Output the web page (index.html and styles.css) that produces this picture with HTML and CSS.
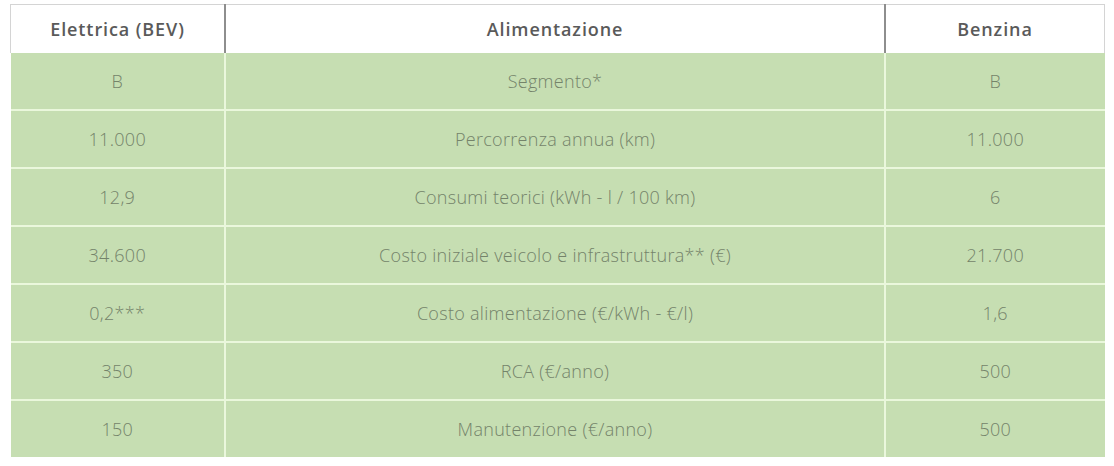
FILE: index.html
```html
<!DOCTYPE html>
<html lang="it">
<head>
<meta charset="utf-8">
<link rel="stylesheet" href="styles.css">
</head>
<body>
<table class="cmp">
  <thead>
    <tr>
      <th class="c1">Elettrica (BEV)</th>
      <th class="c2">Alimentazione</th>
      <th class="c3">Benzina</th>
    </tr>
  </thead>
  <tbody>
    <tr><td>B</td><td>Segmento*</td><td>B</td></tr>
    <tr><td>11.000</td><td>Percorrenza annua (km)</td><td>11.000</td></tr>
    <tr><td>12,9</td><td>Consumi teorici (kWh - l / 100 km)</td><td>6</td></tr>
    <tr><td>34.600</td><td>Costo iniziale veicolo e infrastruttura** (€)</td><td>21.700</td></tr>
    <tr><td>0,2***</td><td>Costo alimentazione (€/kWh - €/l)</td><td>1,6</td></tr>
    <tr><td>350</td><td>RCA (€/anno)</td><td>500</td></tr>
    <tr><td>150</td><td>Manutenzione (€/anno)</td><td>500</td></tr>
  </tbody>
</table>
</body>
</html>
```
FILE: styles.css
```css
html, body {
  margin: 0;
  padding: 0;
  background: #ffffff;
}
body {
  padding: 4px 9px 0 10px;
  font-family: "Open Sans", "DejaVu Sans", sans-serif;
}
.cmp {
  width: 1095px;
  border-collapse: collapse;
  border-spacing: 0;
  table-layout: fixed;
}
.cmp th {
  height: 48px;
  padding: 0;
  background: #ffffff;
  color: #5a5a5a;
  font-size: 18px;
  font-weight: 600;
  letter-spacing: 0.9px;
  border-top: 1px solid #d4d4d4;
  text-align: center;
}
.cmp th.c1 { width: 213px; border-left: 1px solid #d4d4d4; border-right: 2px solid #8e8e8e; }
.cmp th.c2 { width: 658px; border-right: 2px solid #8e8e8e; }
.cmp th.c3 { border-right: 1px solid #d4d4d4; }
.cmp td {
  height: 56px;
  padding: 0;
  background: #c6deb2;
  color: #74836a;
  font-size: 18px;
  font-weight: 300;
  letter-spacing: 0.3px;
  text-align: center;
  border-top: 2px solid #eaf7dc;
  border-left: 2px solid #eaf7dc;
}
.cmp tbody tr:first-child td { border-top: 0; }
.cmp td:first-child { border-left: 0; }
```
